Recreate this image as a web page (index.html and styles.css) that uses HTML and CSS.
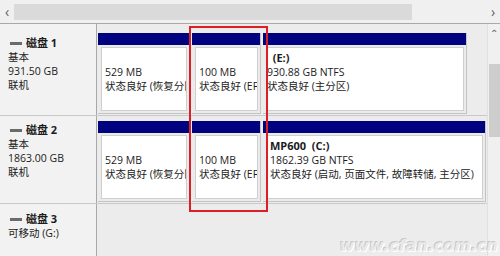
FILE: index.html
```html
<!DOCTYPE html>
<html lang="zh-CN">
<head>
  <meta charset="UTF-8" />
  <title>磁盘管理</title>
  <link rel="stylesheet" href="styles.css">
</head>
<body>
  <!-- Horizontal scrollbar -->
  <div class="hscroll">
    <span class="arrow">&lsaquo;</span>
    <div class="hthumb"></div>
    <span class="arrow right">&rsaquo;</span>
  </div>

  <div class="main">
    <div class="disks">
      <!-- Disk 1 -->
      <div class="disk disk-first">
        <div class="label">
          <div class="name"><span class="disk-icon"></span>磁盘 1</div>
          <div>基本</div>
          <div>931.50 GB</div>
          <div>联机</div>
        </div>
        <div class="parts parts-short">
          <div class="part p1">
            <div class="bar"></div>
            <div class="body"><div class="box">
              <div>&nbsp;</div>
              <div>529 MB</div>
              <div>状态良好 (恢复分区)</div>
            </div></div>
          </div>
          <div class="part p2">
            <div class="bar"></div>
            <div class="body"><div class="box">
              <div>&nbsp;</div>
              <div>100 MB</div>
              <div>状态良好 (EFI 系统分区)</div>
            </div></div>
          </div>
          <div class="part p3">
            <div class="bar"></div>
            <div class="body"><div class="box flush">
              <div class="vol">&nbsp;&nbsp;(E:)</div>
              <div>930.88 GB NTFS</div>
              <div>状态良好 (主分区)</div>
            </div></div>
          </div>
        </div>
      </div>

      <!-- Disk 2 -->
      <div class="disk">
        <div class="label">
          <div class="name"><span class="disk-icon"></span>磁盘 2</div>
          <div>基本</div>
          <div>1863.00 GB</div>
          <div>联机</div>
        </div>
        <div class="parts">
          <div class="part p1">
            <div class="bar"></div>
            <div class="body"><div class="box">
              <div>&nbsp;</div>
              <div>529 MB</div>
              <div>状态良好 (恢复分区)</div>
            </div></div>
          </div>
          <div class="part p2">
            <div class="bar"></div>
            <div class="body"><div class="box">
              <div>&nbsp;</div>
              <div>100 MB</div>
              <div>状态良好 (EFI 系统分区)</div>
            </div></div>
          </div>
          <div class="part p3">
            <div class="bar"></div>
            <div class="body"><div class="box">
              <div class="vol">MP600&nbsp; (C:)</div>
              <div>1862.39 GB NTFS</div>
              <div>状态良好 (启动, 页面文件, 故障转储, 主分区)</div>
            </div></div>
          </div>
        </div>
      </div>

      <!-- Disk 3 -->
      <div class="disk disk-last">
        <div class="label">
          <div class="name"><span class="disk-icon"></span>磁盘 3</div>
          <div>可移动 (G:)</div>
        </div>
        <div class="parts"></div>
      </div>
    </div>

    <!-- Vertical scrollbar -->
    <div class="vscroll">
      <span class="arrow up">&#8963;</span>
      <div class="vthumb"></div>
    </div>
  </div>

  <!-- Annotation and watermark -->
  <div class="highlight"></div>
  <div class="watermark">www.cfan.com.cn</div>
</body>
</html>
```

FILE: styles.css
```css
/* ===== Page ===== */
body {
  margin: 0;
  width: 500px;
  height: 256px;
  overflow: hidden;
  position: relative;
  background: #f0f0f0;
  color: #1b1b1b;
  font-family: "Open Sans", "Noto Sans CJK SC", sans-serif;
  font-size: 10.5px;
  line-height: 14px;
}

/* ===== Horizontal scrollbar ===== */
.hscroll {
  height: 23px;
  display: flex;
  align-items: center;
  background: #f0f0f0;
  border-bottom: 1px solid #a9a9a9;
}

.hscroll .arrow {
  width: 14px;
  text-align: center;
  color: #606060;
  font-size: 14px;
}

.hscroll .arrow.right {
  margin-left: auto;
}

.hthumb {
  width: 398px;
  height: 16px;
  background: #dadada;
}

/* ===== Main area ===== */
.main {
  display: flex;
  height: 232px;
}

.disks {
  flex: 1;
  min-width: 0;
}

.disk {
  display: flex;
  border-bottom: 1px solid #c9c9c9;
  height: 87px;
}

.disk-first {
  height: 91px;
}

.disk-first .parts {
  padding-top: 9px;
}

.disk-last {
  border-bottom: none;
  height: 60px;
}

/* ===== Disk labels ===== */
.label {
  width: 88px;
  flex: none;
  padding: 7px 0 0 8px;
  background: #f2f2f2;
  border-right: 1px solid #a8a8a8;
}

.disk-first .label {
  padding-top: 12px;
}

.disk-last .label {
  padding-top: 8px;
}

.name {
  font-size: 11px;
  font-weight: bold;
  display: flex;
  align-items: center;
}

.disk-icon {
  width: 12px;
  height: 3px;
  margin: 0 4px 0 2px;
  background: #6b6b6b;
}

/* ===== Partitions ===== */
.parts {
  flex: 1;
  min-width: 0;
  display: flex;
  gap: 2px;
  padding: 5px 1px 0 1px;
  background: #ececec;
}

.parts-short {
  padding-right: 20px;
}

.part {
  display: flex;
  flex-direction: column;
  height: 81px;
  border-right: 1px solid #c4c4c4;
  border-bottom: 1px solid #c4c4c4;
  box-sizing: border-box;
}

.p1 { width: 92px; flex: none; }
.p2 { width: 69px; flex: none; }
.p3 { flex: 1; min-width: 0; }

.bar {
  height: 12px;
  background: #010280;
}

.body {
  flex: 1;
  padding: 2px 2px 2px 3px;
  background: #ebebeb;
  display: flex;
}

.box {
  flex: 1;
  min-width: 0;
  background: #ffffff;
  border: 1px solid #cfcfcf;
  padding: 3px 0 0 3px;
  overflow: hidden;
  white-space: nowrap;
}

.box.flush {
  padding-left: 0;
}

.vol {
  font-size: 11px;
  font-weight: bold;
}

/* ===== Vertical scrollbar ===== */
.vscroll {
  width: 12px;
  flex: none;
  background: #f0f0f0;
  border-left: 1px solid #e0e0e0;
  display: flex;
  flex-direction: column;
  align-items: center;
}

.vscroll .arrow {
  height: 30px;
  padding-top: 2px;
  color: #606060;
  font-size: 10px;
}

.vthumb {
  width: 11px;
  height: 73px;
  margin-top: 8px;
  background: #cdcdcd;
}

/* ===== Red annotation box ===== */
.highlight {
  position: absolute;
  left: 189px;
  top: 26px;
  width: 75px;
  height: 182px;
  border: 2px solid #dc1f26;
}

/* ===== Watermark ===== */
.watermark {
  position: absolute;
  right: 2px;
  bottom: 3px;
  font-family: "DejaVu Sans", sans-serif;
  font-size: 16px;
  font-weight: bold;
  font-style: italic;
  color: #e9e9e9;
  text-shadow: -1px -1px 0 #c8c8c8, 1px 1px 0 #ffffff;
}
```
